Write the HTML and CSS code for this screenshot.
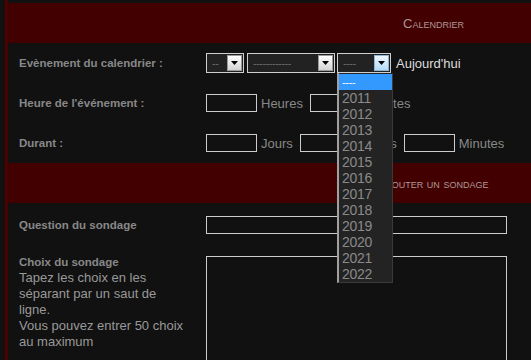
FILE: index.html
```html
<html>
    <head>
        <title>calendrier</title>
<link rel="stylesheet" href="styles.css">
    </head>
    <body>
        <div class="page">
            <div class="cat-head">Calendrier</div>
            <div class="row">
                <div class="label">Evènement du calendrier :</div>
                <div class="field">
                    <span class="select s-day">
                        <span class="val">--</span>
                        <span class="arrow"><svg width="7" height="4" viewBox="0 0 7 4"><path d="M0 0h7L3.5 4z"/></svg></span>
                    </span>
                    <span class="select s-month">
                        <span class="val">------------</span>
                        <span class="arrow"><svg width="7" height="4" viewBox="0 0 7 4"><path d="M0 0h7L3.5 4z"/></svg></span>
                    </span>
                    <span class="select s-year">
                        <span class="val">----</span>
                        <span class="arrow hover"><svg width="7" height="4" viewBox="0 0 7 4"><path d="M0 0h7L3.5 4z"/></svg></span>
                        <ul class="options">
                            <li class="selected">----</li>
                            <li>2011</li>
                            <li>2012</li>
                            <li>2013</li>
                            <li>2014</li>
                            <li>2015</li>
                            <li>2016</li>
                            <li>2017</li>
                            <li>2018</li>
                            <li>2019</li>
                            <li>2020</li>
                            <li>2021</li>
                            <li>2022</li>
                        </ul>
                    </span>
                    <a class="today">Aujourd'hui</a>
                </div>
            </div>
            <div class="row">
                <div class="label">Heure de l'événement :</div>
                <div class="field">
                    <input type="text" class="small">
                    <span class="unit">Heures</span>
                    <input type="text" class="small">
                    <span class="unit">Minutes</span>
                </div>
            </div>
            <div class="row">
                <div class="label">Durant :</div>
                <div class="field">
                    <input type="text" class="small">
                    <span class="unit">Jours</span>
                    <input type="text" class="small">
                    <span class="unit">Heures</span>
                    <input type="text" class="small">
                    <span class="unit">Minutes</span>
                </div>
            </div>
            <div class="cat-head">Ajouter un sondage</div>
            <div class="row row-question">
                <div class="label">Question du sondage</div>
                <div class="field">
                    <input type="text" class="wide">
                </div>
            </div>
            <div class="row row-choices">
                <div class="label">
                    Choix du sondage
                    <p class="explain">Tapez les choix en les séparant par un saut de ligne.<br>Vous pouvez entrer 50 choix au maximum</p>
                </div>
                <div class="field">
                    <textarea class="wide"></textarea>
                </div>
            </div>
        </div>
    </body>
</html>
```

FILE: styles.css
```css
html{
    background-color: #111111;
}
body{
    margin: 0;
    font-family: "Liberation Sans", Arial, sans-serif;
}
    .page{
        margin-left: 5px;
        border-left: 3px solid #4e0000;
        padding-top: 3px;
        min-height: 400px;
    }
    .cat-head{
        height: 40px;
        background-color: #420000;
        color: #ad9797;
        font-size: 13px;
        font-variant: small-caps;
        display: flex;
        align-items: center;
        justify-content: center;
        padding-left: 340px;
        padding-right: 12px;
    }
    .row{
        display: flex;
        align-items: center;
        height: 40px;
    }
    .label{
        width: 187px;
        padding-left: 11px;
        color: #888888;
        font-size: 11.5px;
        font-weight: bold;
    }
    .field{
        display: flex;
        align-items: center;
        color: #888888;
        font-size: 13px;
    }
    input, textarea{
        background-color: #111111;
        border: 1px solid #cccccc;
        margin: 0;
        padding: 0;
        box-sizing: border-box;
    }
    .small{
        width: 51px;
        height: 18px;
        margin-right: 4px;
    }
    .unit{
        margin-right: 7px;
    }
    .wide{
        width: 301px;
    }
    .row-question{
        height: 42px;
    }
    .row-question .label{
        margin-top: 2px;
    }
    .row-question .wide{
        height: 18px;
        margin-top: 2px;
    }
    .row-choices{
        align-items: flex-start;
        height: auto;
        padding-top: 11px;
    }
    .row-choices .label{
        line-height: 14px;
        margin-top: -1px;
    }
    .row-choices textarea{
        height: 130px;
        resize: none;
    }
    .explain{
        margin: 1px 0 0 0;
        width: 168px;
        font-size: 13px;
        font-weight: normal;
        line-height: 16px;
        color: #999999;
    }

    /* listes deroulantes dessinees */
    .select{
        position: relative;
        display: flex;
        align-items: center;
        justify-content: space-between;
        height: 20px;
        box-sizing: border-box;
        border: 1px solid #cfcfcf;
        background-color: #222222;
        padding: 1px;
    }
    .s-day{
        width: 38px;
        margin-right: 3px;
    }
    .s-month{
        width: 88px;
        margin-right: 2px;
    }
    .s-year{
        width: 54px;
        margin-right: 5px;
    }
    .val{
        color: #6a6a6a;
        font-size: 11px;
        padding-left: 4px;
        letter-spacing: -0.5px;
    }
    .arrow{
        display: flex;
        align-items: center;
        justify-content: center;
        width: 15px;
        height: 16px;
        box-sizing: border-box;
        border: 1px solid #9a9a9a;
        background: linear-gradient(#ffffff, #d4d4d4);
    }
    .arrow.hover{
        border-color: #8fb6d6;
        background: linear-gradient(#eef7ff, #b5dbf7);
    }
    .arrow svg{
        fill: #000000;
    }
    .today{
        color: #dddddd;
        font-size: 13px;
    }
    .options{
        position: absolute;
        top: 19px;
        left: -1px;
        width: 56px;
        margin: 0;
        padding: 1px 0 0 0;
        list-style: none;
        box-sizing: border-box;
        background-color: #232323;
        border-left: 2px solid #a0a0a0;
        border-right: 1px solid #3a3a3a;
        border-bottom: 1px solid #3a3a3a;
        z-index: 2;
    }
    .options li{
        height: 16px;
        line-height: 17px;
        padding-left: 3px;
        color: #8a8a8a;
        font-size: 14px;
        letter-spacing: -0.3px;
    }
    .options .selected{
        background-color: #3399ff;
        color: #ffffff;
        font-size: 11px;
    }
```
